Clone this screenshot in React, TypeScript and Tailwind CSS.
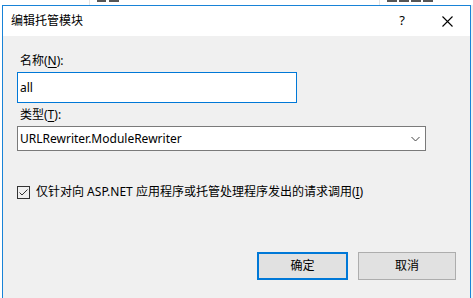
const font = "font-['Segoe_UI','Noto_Sans','Noto_Sans_CJK_SC',sans-serif]";

function Mn({ children }: { children: string }) {
  return <span className="underline underline-offset-2">{children}</span>;
}

function CloseIcon() {
  return (
    <svg width="11" height="11" viewBox="0 0 11 11" className="text-black">
      <path d="M0.5 0.5 L10.5 10.5 M10.5 0.5 L0.5 10.5" stroke="currentColor" strokeWidth="1.1" fill="none" />
    </svg>
  );
}

export default function App() {
  return (
    <div className={`flex h-[298px] w-[473px] flex-col overflow-hidden bg-white text-[12px] text-black ${font}`}>
      {/* list behind the dialog, only the feet of its header text peek out */}
      <div className="flex h-[5px] overflow-hidden bg-white">
        <div className="w-[90px] border-r border-[#e5e5e5]" />
        <div className="flex w-[290px] items-start gap-[3px] border-r border-[#e5e5e5] pl-[7px]">
          <div className="h-[2px] w-[9px] bg-[#555]" />
          <div className="h-[2px] w-[10px] bg-[#555]" />
        </div>
        <div className="flex flex-1 items-start gap-[2px] pl-[7px]">
          <div className="h-[2px] w-[10px] bg-[#555]" />
          <div className="h-[2px] w-[10px] bg-[#555]" />
          <div className="h-[2px] w-[10px] bg-[#555]" />
          <div className="h-[2px] w-[10px] bg-[#555]" />
        </div>
      </div>

      <div className="flex flex-1">
        <div className="w-[2px] bg-white" />
        <div className="flex w-[469px] flex-col border-x border-t border-[#1883d7]">
          {/* title bar */}
          <div className="flex h-[30px] items-center bg-white pl-[8px] pr-[17px]">
            <span className="flex-1 text-[12px]">编辑托管模块</span>
            <span className="mr-[37px] text-[13px]">?</span>
            <CloseIcon />
          </div>

          {/* body */}
          <div className="flex flex-1 flex-col bg-[#f0f0f0] pl-[14px]">
            <label className="mt-[17px] pl-[3px] leading-[16px]">
              名称(<Mn>N</Mn>):
            </label>
            <div className="mt-[3px] flex h-[31px] w-[280px] items-center border border-[#0078d7] bg-white pl-[2px]">
              all
            </div>

            <label className="mt-[4px] pl-[3px] leading-[16px]">
              类型(<Mn>T</Mn>):
            </label>
            <div className="mt-[3px] flex h-[25px] w-[409px] items-center justify-between border border-[#7a7a7a] bg-white pl-[2px] pr-[5px]">
              <span>URLRewriter.ModuleRewriter</span>
              <svg width="9" height="6" viewBox="0 0 9 6">
                <path d="M0.5 1 L4.5 5 L8.5 1" stroke="#444" strokeWidth="1" fill="none" />
              </svg>
            </div>

            <div className="mt-[33px] flex items-center">
              <span className="flex h-[13px] w-[13px] items-center justify-center border border-[#333] bg-[#f0f0f0]">
                <svg width="9" height="7" viewBox="0 0 9 7">
                  <path d="M0.5 3.5 L3 6 L8.5 0.5" stroke="#333" strokeWidth="1" fill="none" />
                </svg>
              </span>
              <span className="ml-[6px] leading-[16px]">
                仅针对向 ASP.NET 应用程序或托管处理程序发出的请求调用(<Mn>I</Mn>)
              </span>
            </div>

            <div className="mt-[52px] flex justify-end gap-[10px] pr-[14px]">
              <button className="h-[28px] w-[91px] border-2 border-[#0078d7] bg-[#e1e1e1] text-[12px]">确定</button>
              <button className="h-[28px] w-[98px] border border-[#adadad] bg-[#e1e1e1] text-[12px]">取消</button>
            </div>
          </div>
        </div>
        <div className="w-[2px] bg-[#f0f0f0]" />
      </div>
    </div>
  );
}
